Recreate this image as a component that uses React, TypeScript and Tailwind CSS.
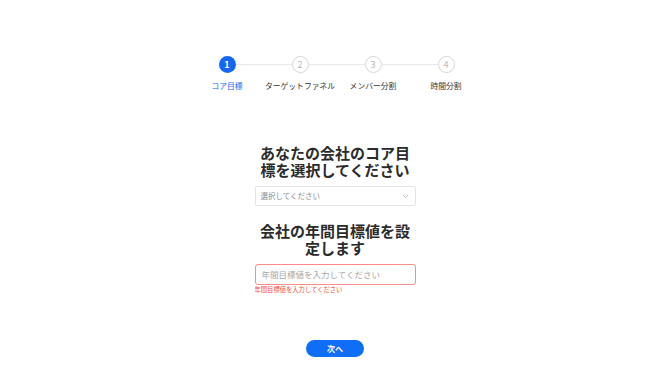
import React from "react";

const steps = ["コア目標", "ターゲットファネル", "メンバー分割", "時間分割"];

export default function App() {
  return (
    <div
      className="w-[670px] h-[373px] bg-white flex flex-col items-center pt-[56px]"
      style={{ fontFamily: '"Noto Sans CJK JP", "Noto Sans", sans-serif' }}
    >
      <div className="flex w-[292px] ml-[3px]">
        {steps.map((s, i) => (
          <div key={i} className="relative flex-1 flex flex-col items-center">
            {i < steps.length - 1 && (
              <div className="absolute top-[8px] left-[calc(50%+9px)] w-[56px] h-px bg-[#e8e8e8]" />
            )}
            <div
              className={
                i === 0
                  ? "w-[17px] h-[17px] rounded-full bg-[#1467f5] text-white flex items-center justify-center text-[9px] font-bold leading-none"
                  : "w-[17px] h-[17px] rounded-full border border-[#d6d6d6] bg-white text-[#b8b8b8] flex items-center justify-center text-[9px] leading-none"
              }
            >
              {i + 1}
            </div>
            <div
              className={
                "mt-[7px] text-[7.8px] leading-[12px] whitespace-nowrap " +
                (i === 0 ? "text-[#1467f5]" : "text-[#333333]")
              }
            >
              {s}
            </div>
          </div>
        ))}
      </div>

      <div className="w-[161px] flex flex-col mt-[52px]">
        <h1 className="text-[15px] leading-[17px] font-bold text-[#2b2b2b] text-center">
          あなたの会社のコア目標を選択してください
        </h1>
        <div className="mt-[8px] h-[20px] border border-[#e3e3e3] rounded-[2px] flex items-center justify-between pl-[5px] pr-[6px]">
          <span className="text-[7.5px] text-[#8c8c8c]">選択してください</span>
          <svg width="7" height="5" viewBox="0 0 7 5" fill="none">
            <path d="M1 1 L3.5 3.5 L6 1" stroke="#b0b0b0" strokeWidth="0.8" />
          </svg>
        </div>
        <h2 className="mt-[16px] text-[15px] leading-[17px] font-bold text-[#2b2b2b] text-center">
          会社の年間目標値を設定します
        </h2>
        <div className="mt-[8px] h-[21px] border border-[#ff8a8a] rounded-[3px] flex items-center pl-[6px]">
          <span className="text-[8.5px] text-[#a6a6a6]">年間目標値を入力してください</span>
        </div>
        <div className="text-[6.3px] leading-[8px] mt-px text-[#f5483b]">
          年間目標値を入力してください
        </div>
      </div>

      <button className="mt-[46px] w-[58px] h-[17px] rounded-full bg-[#0f6ef5] text-white text-[8px] font-bold flex items-center justify-center">
        次へ
      </button>
    </div>
  );
}
